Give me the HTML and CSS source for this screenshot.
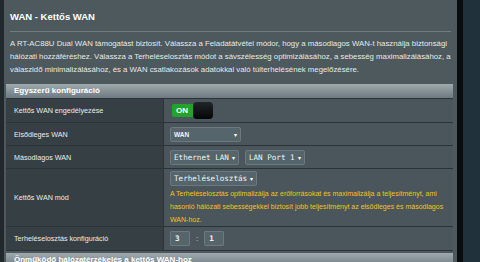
FILE: index.html
```html
<!DOCTYPE html>
<html lang="hu">
<head>
    <meta charset="UTF-8">
    <meta name="viewport" content="width=device-width, initial-scale=1.0">
    <title>WAN - Kettős WAN</title>
    <link rel="stylesheet" href="styles.css">
</head>
<body>

    <div class="frame">
        <div class="edge"></div>

        <main class="panel">
            <h1 class="title">WAN - Kettős WAN</h1>
            <div class="divider"></div>
            <p class="intro">A RT-AC88U Dual WAN támogatást biztosít. Válassza a Feladatátvétel módor, hogy a másodlagos WAN-t használja biztonsági hálózati hozzáféréshez. Válassza a Terheléselosztás módot a sávszélesség optimizálásához, a sebesség maximalizálásához, a válaszidő minimalizálásához, és a WAN csatlakozások adatokkal való túlterhelésének megelőzésére.</p>

            <div class="config">
                <div class="config-head">Egyszerű konfiguráció</div>

                <div class="row row-tall">
                    <div class="label">Kettős WAN engedélyezése</div>
                    <div class="field">
                        <div class="switch">
                            <span class="switch-on">ON</span>
                            <span class="switch-knob"></span>
                        </div>
                    </div>
                </div>

                <div class="row">
                    <div class="label">Elsődleges WAN</div>
                    <div class="field">
                        <div class="select select-wan"><span class="select-text bold">WAN</span><span class="caret">▾</span></div>
                    </div>
                </div>

                <div class="row">
                    <div class="label">Másodlagos WAN</div>
                    <div class="field">
                        <div class="select"><span class="select-text">Ethernet LAN</span><span class="caret">▾</span></div>
                        <div class="select"><span class="select-text">LAN Port 1</span><span class="caret">▾</span></div>
                    </div>
                </div>

                <div class="row row-mode">
                    <div class="label">Kettős WAN mód</div>
                    <div class="field field-stack">
                        <div class="select"><span class="select-text">Terheléselosztás</span><span class="caret">▾</span></div>
                        <p class="hint">A Terheléselosztás optimalizálja az erőforrásokat és maximalizálja a teljesítményt, ami<br>hasonló hálózati sebességekkel biztosít jobb teljesítményt az elsődleges és másodlagos<br>WAN-hoz.</p>
                    </div>
                </div>

                <div class="row row-tall">
                    <div class="label">Terheléselosztás konfiguráció</div>
                    <div class="field">
                        <input type="text" class="ratio" value="3">
                        <span class="ratio-sep">:</span>
                        <input type="text" class="ratio" value="1">
                    </div>
                </div>
            </div>

            <div class="config config-next">
                <div class="config-head">Önműködő hálózatérzékelés a kettős WAN-hoz</div>
            </div>
        </main>

        <div class="gutter"></div>
        <div class="backdrop"></div>
    </div>

</body>
</html>
```

FILE: styles.css
```css
* {
    margin: 0;
    padding: 0;
    box-sizing: border-box;
    font-family: 'Liberation Sans', Arial, sans-serif;
}

body {
    background-color: #1f2e37;
    height: 262px;
    overflow: hidden;
}

.frame {
    display: flex;
    height: 262px;
}

.edge {
    width: 4px;
    background-color: #22292c;
}

.panel {
    width: 453px;
    background-color: #4d595d;
    padding: 0 4px 0 2px;
}

.gutter {
    width: 6px;
    background-color: #0a0c0d;
}

.backdrop {
    flex: 1;
    background-color: #21313b;
}

.title {
    margin-left: 4px;
    padding-top: 11px;
    font-size: 9.5px;
    line-height: 12px;
    font-weight: bold;
    color: #ffffff;
}

.divider {
    margin: 8px 2px 0 4px;
    height: 1px;
    background-color: #6f7b7f;
}

.intro {
    margin: 5px 0 0 4px;
    font-size: 7.8px;
    line-height: 13px;
    color: #e6e9ea;
}

.config {
    margin-top: 8px;
    border-bottom: 1px solid #2b3336;
}

.config-head {
    height: 14px;
    padding-left: 8px;
    font-size: 8px;
    line-height: 14px;
    font-weight: bold;
    color: #ffffff;
    background: linear-gradient(#a0aaae, #6d7a80);
}

.row {
    display: grid;
    grid-template-columns: 158px 1fr;
    height: 23px;
    border-top: 1px solid #2b3336;
}

.row-tall {
    height: 24px;
}

.row-mode {
    height: 58px;
}

.label {
    display: flex;
    align-items: center;
    padding-left: 8px;
    font-size: 7.2px;
    color: #e9ecec;
    background-color: #364044;
    border-right: 1px solid #2b3336;
}

.field {
    display: flex;
    align-items: center;
    gap: 6px;
    padding: 0 4px 0 6px;
    background-color: #4a565b;
}

.field-stack {
    flex-direction: column;
    align-items: flex-start;
    gap: 0;
    padding-top: 2px;
}

.switch {
    display: flex;
    align-items: center;
    margin-left: 2px;
}

.switch-on {
    width: 22px;
    height: 13px;
    padding-left: 4px;
    font-size: 8px;
    line-height: 13px;
    font-weight: bold;
    color: #ffffff;
    background-color: #22a32b;
    border-radius: 2px 0 0 2px;
}

.switch-knob {
    width: 20px;
    height: 17px;
    margin-left: -1px;
    background: linear-gradient(#202528, #050606);
    border-radius: 4px;
}

.select {
    display: flex;
    align-items: center;
    justify-content: space-between;
    gap: 3px;
    height: 15px;
    padding: 0 3px 0 3px;
    background-color: #56656b;
    border: 1px solid #6b797e;
    border-radius: 2px;
}

.select-wan {
    width: 71px;
}

.select-text {
    font-family: 'DejaVu Sans Mono', 'Liberation Mono', monospace;
    font-size: 7.6px;
    color: #f2f4f4;
}

.select-text.bold {
    font-family: 'Liberation Sans', Arial, sans-serif;
    font-size: 6.5px;
    font-weight: bold;
}

.caret {
    font-size: 6px;
    color: #ffffff;
}

.hint {
    margin-top: 1px;
    font-size: 7px;
    line-height: 13px;
    white-space: nowrap;
    color: #f0c419;
}

.ratio {
    width: 20px;
    height: 15px;
    padding-left: 4px;
    font-family: 'DejaVu Sans Mono', 'Liberation Mono', monospace;
    font-size: 7.6px;
    font-weight: bold;
    color: #f2f4f4;
    background-color: #56656b;
    border: 1px solid #6b797e;
    border-radius: 1px;
    outline: none;
}

.ratio-sep {
    font-size: 8px;
    color: #d7dcde;
}

.config-next {
    margin-top: 2px;
    border-bottom: none;
}
```
